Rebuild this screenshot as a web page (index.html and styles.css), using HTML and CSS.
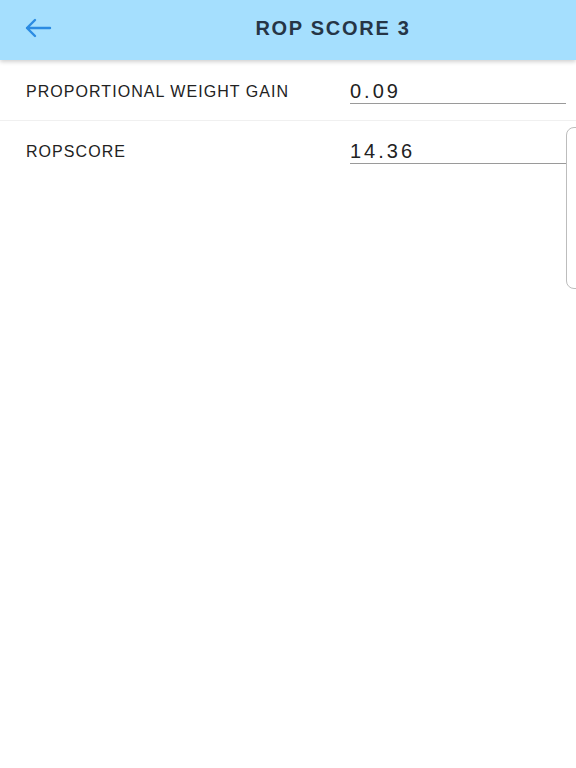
FILE: index.html
```html
<!DOCTYPE html>
<html lang="en">
<head>
    <meta charset="UTF-8">
    <meta name="viewport" content="width=device-width, initial-scale=1.0">
    <title>ROP Score 3</title>
    <link rel="stylesheet" href="styles.css">
</head>
<body>
    <div class="top-bar">
        <button class="back-button" type="button" aria-label="Back">
            <svg width="28" height="20" viewBox="0 0 28 20">
                <path d="M26 10H3M11 2L3 10L11 18" fill="none" stroke="#2b8be2" stroke-width="2.4" stroke-linecap="round" stroke-linejoin="round"/>
            </svg>
        </button>
        <h1 class="top-title">ROP SCORE 3</h1>
    </div>

    <div class="score-list">
        <div class="score-row">
            <label for="weightGain">PROPORTIONAL WEIGHT GAIN</label>
            <input type="text" id="weightGain" value="0.09" readonly>
        </div>
        <div class="score-row">
            <label for="ropScore">ROPSCORE</label>
            <input type="text" id="ropScore" value="14.36" readonly>
        </div>
    </div>

    <div class="side-handle"></div>
</body>
</html>
```

FILE: styles.css
```css
body {
    font-family: "Liberation Sans", Arial, sans-serif;
    background-color: #ffffff;
    margin: 0;
    position: relative;
    min-height: 768px;
}
.top-bar {
    display: flex;
    align-items: center;
    height: 60px;
    background-color: #a5dffe;
    box-shadow: 0 2px 4px rgba(0, 0, 0, 0.18);
}
.back-button {
    width: 90px;
    height: 60px;
    padding: 0 0 4px 24px;
    border: none;
    background: none;
    display: flex;
    align-items: center;
    cursor: pointer;
}
.top-title {
    flex: 1;
    margin: 0 0 4px;
    text-align: center;
    font-size: 20px;
    font-weight: bold;
    letter-spacing: 1.7px;
    color: #263546;
}
.score-row {
    box-sizing: border-box;
    display: flex;
    align-items: center;
    height: 60px;
    padding: 3px 10px 0 26px;
}
.score-row + .score-row {
    height: 59px;
    border-top: 1px solid #f0f0f0;
}
.score-row label {
    width: 324px;
    font-size: 16px;
    letter-spacing: 1.05px;
    color: #222222;
}
.score-row input {
    flex: 1;
    min-width: 0;
    height: 24px;
    padding: 0;
    border: none;
    border-bottom: 1px solid #9a9a9a;
    font-family: "Liberation Sans", Arial, sans-serif;
    font-size: 20px;
    letter-spacing: 3px;
    color: #222222;
    background: none;
    outline: none;
}
.side-handle {
    position: absolute;
    top: 127px;
    right: -10px;
    width: 18px;
    height: 160px;
    border: 1px solid #bdbdbd;
    border-radius: 8px;
    background: #ffffff;
}
```
